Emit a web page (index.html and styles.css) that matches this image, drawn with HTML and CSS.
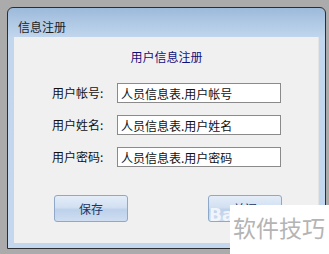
FILE: index.html
```
<!DOCTYPE html>
<html lang="zh">

<head>
	<meta charset="UTF-8">
	<meta name="viewport" content="width=device-width, initial-scale=1.0">
	<title>信息注册</title>
	<link rel="stylesheet" href="styles.css">
</head>

<body>
	<div class="window">
		<div class="titlebar">信息注册</div>
		<div class="frame">
			<div class="panel">
				<h2 class="heading">用户信息注册</h2>
				<div class="form">
					<div class="row">
						<label for="account">用户帐号:</label>
						<input type="text" id="account" value="人员信息表.用户帐号">
					</div>
					<div class="row">
						<label for="name">用户姓名:</label>
						<input type="text" id="name" value="人员信息表.用户姓名">
					</div>
					<div class="row">
						<label for="password">用户密码:</label>
						<input type="text" id="password" value="人员信息表.用户密码">
					</div>
				</div>
				<div class="actions">
					<button class="btn">保存</button>
					<button class="btn">关闭</button>
				</div>
			</div>
		</div>
	</div>

	<!-- 水印 -->
	<span class="mark-logo">Bai</span>
	<div class="mark">软件技巧</div>
</body>

</html>
```

FILE: styles.css
```
body {
	margin: 0;
	padding: 7px 3px 5px 7px;
	background: #ababab;
	font-family: "Noto Sans CJK SC", "DejaVu Sans", sans-serif;
	font-size: 12px;
}

.window {
	width: 317px;
	height: 240px;
	border: 1px solid #2e2e2e;
	border-radius: 6px 6px 0 0;
	background: linear-gradient(#9dbadb, #c2d7ed 30px, #c3d8ee);
	display: flex;
	flex-direction: column;
	overflow: hidden;
}

.titlebar {
	height: 29px;
	padding: 0 0 3px 10px;
	box-sizing: border-box;
	display: flex;
	align-items: flex-end;
	color: #1e1e1e;
	line-height: 14px;
}

.frame {
	flex: 1;
	padding: 0 6px 5px 6px;
	display: flex;
}

.panel {
	flex: 1;
	background: #f0f0f0;
	box-shadow: inset -1px 0 0 #e4e4e4;
}

.heading {
	margin: 13px 0 0;
	font-size: 12px;
	font-weight: normal;
	line-height: 14px;
	text-align: center;
	color: #10107a;
}

.form {
	margin-top: 19px;
	display: flex;
	flex-direction: column;
	gap: 12px;
}

.row {
	display: flex;
	align-items: center;
	padding-left: 38px;
}

.row label {
	width: 65px;
	color: #111;
	line-height: 14px;
}

.row input {
	width: 164px;
	height: 20px;
	box-sizing: border-box;
	margin: 0;
	padding: 0 0 0 3px;
	border: 1px solid #8a8a8a;
	background: #fff;
	font-family: inherit;
	font-size: 12px;
	color: #111;
	outline: none;
}

.actions {
	margin-top: 28px;
	display: flex;
	gap: 80px;
	padding-left: 40px;
}

.btn {
	width: 74px;
	height: 27px;
	padding: 0;
	border: 1px solid #8fa8c8;
	border-radius: 3px;
	background: linear-gradient(#e4edf8, #d2e0f2 45%, #bdd1ea 55%, #cfdef1);
	font-family: inherit;
	font-size: 12px;
	color: #1b3566;
	cursor: pointer;
}

.mark-logo {
	position: absolute;
	left: 209px;
	top: 205px;
	font-family: "DejaVu Sans", sans-serif;
	font-weight: bold;
	font-size: 17px;
	color: rgba(255, 255, 255, 0.75);
}

.mark {
	position: absolute;
	left: 230px;
	top: 205px;
	right: 0;
	bottom: 0;
	background: #fff;
	padding: 8px 0 0 3px;
	font-size: 23px;
	line-height: 28px;
	letter-spacing: 0;
	color: #b4b4b4;
}
```
